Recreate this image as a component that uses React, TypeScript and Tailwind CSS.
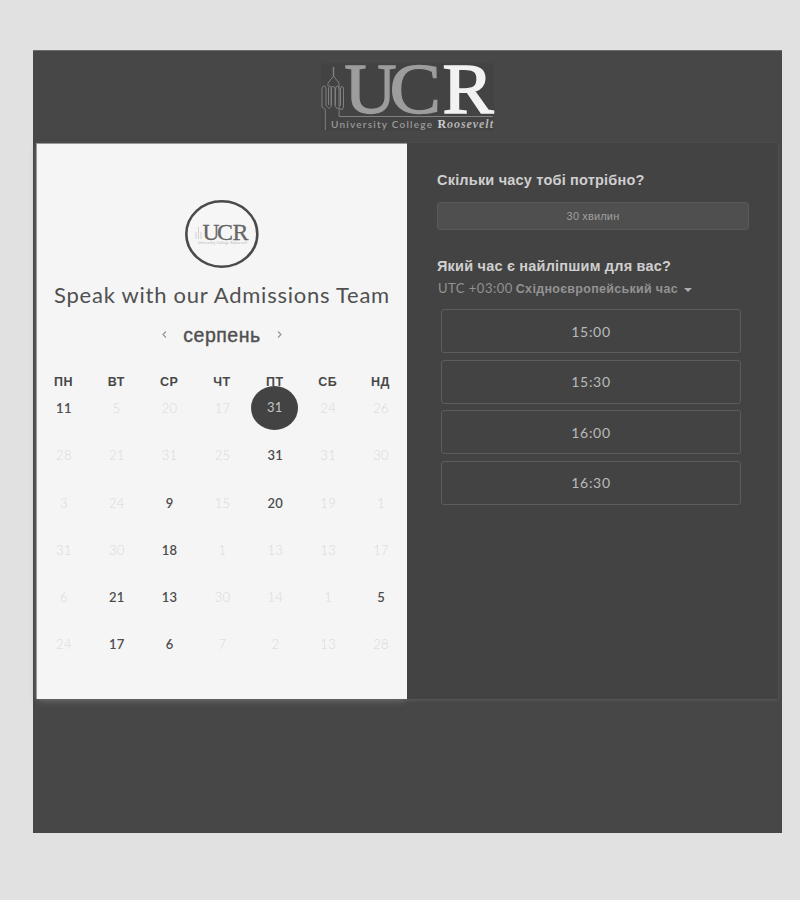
import React from 'react';

const weekdays = ['ПН', 'ВТ', 'СР', 'ЧТ', 'ПТ', 'СБ', 'НД'];

// A leading "*" marks a bookable day, "@" the chosen one.
const weeks = [
  ['*11', '5', '20', '17', '@31', '24', '26'],
  ['28', '21', '31', '25', '*31', '31', '30'],
  ['3', '24', '*9', '15', '*20', '19', '1'],
  ['31', '30', '*18', '1', '13', '13', '17'],
  ['6', '*21', '*13', '30', '14', '1', '*5'],
  ['24', '*17', '*6', '7', '2', '13', '28'],
];

const slots = ['15:00', '15:30', '16:00', '16:30'];

const serif = "'Liberation Serif', serif";
const sans = "Lato, 'Liberation Sans', sans-serif";

function Logo() {
  return (
    <svg className="block h-[68px] w-[176px] overflow-visible" viewBox="320 63 176 68">
      <rect x="321" y="63.500" width="173" height="67" fill="#434343" />
      <g fill="none" stroke="#808080" strokeWidth="1">
        <path strokeWidth="1.500" d="M333.500 67v9" />
        <path d="M333.500 76l-5.500 7v3M333.500 76l5.500 7v6" />
        <path d="M325.300 130v-20.500l-3.300-2.500v-18.500q0-2.500 2-2.500t2 2.500v17l3 3 2-2v-17.500q0-2.500 2-2.500t2 2.500v17l2.500 3 1-1" />
        <path d="M328.500 105v-16q0-3 1.500-3t1.500 3v16M335.500 105v-16q0-3 1.800-3t1.800 3v27.500H493M340.500 106v-17q0-2.500 1.500-2.500t1.500 2.500v18l-1.500 3-2.500-2" />
      </g>
      <g fontFamily={serif} fontSize="72">
        <text x="344.500" y="113" fill="#9d9d9d" stroke="#9d9d9d" strokeWidth="1.500" textLength="52" lengthAdjust="spacingAndGlyphs">U</text>
        <text x="389.500" y="113" fill="#9d9d9d" stroke="#9d9d9d" strokeWidth="1.300" textLength="51.500" lengthAdjust="spacingAndGlyphs">C</text>
        <text x="442.500" y="113" fill="#f2f2f2" stroke="#f2f2f2" strokeWidth="1.600" textLength="51" lengthAdjust="spacingAndGlyphs">R</text>
      </g>
      <text x="331" y="128" fill="#9a9a9a" fontFamily={sans} fontSize="10" fontWeight="600" textLength="101" lengthAdjust="spacing">University College</text>
      <text x="437.500" y="128" fill="#cfcfcf" fontFamily={serif} fontSize="12" fontWeight="700">R</text>
      <text x="447" y="128" fill="#b2b2b2" fontFamily={serif} fontSize="12" fontStyle="italic" fontWeight="700" textLength="46">oosevelt</text>
    </svg>
  );
}

function Badge() {
  return (
    <svg className="block h-[68px] w-[74px]" viewBox="185 200 74 68">
      <ellipse cx="221.800" cy="234" rx="35.500" ry="32.700" fill="#f6f6f6" stroke="#4a4a4a" strokeWidth="2.600" />
      <g fontFamily={serif} fontSize="23.500" fill="#666" stroke="#666" strokeWidth="0.300">
        <text x="202.500" y="240" textLength="17" lengthAdjust="spacingAndGlyphs">U</text>
        <text x="217" y="240" textLength="16" lengthAdjust="spacingAndGlyphs">C</text>
        <text x="232.500" y="240" textLength="16" lengthAdjust="spacingAndGlyphs">R</text>
      </g>
      <path d="M198.500 227v4M196 232v7M198.500 231v8M201 232v7" stroke="#d2d2d2" fill="none" />
      <text x="198" y="244" fontFamily={sans} fontSize="3.500" fill="#b5b5b5" textLength="49">University College Roosevelt</text>
    </svg>
  );
}

function Day({ value }: { value: string }) {
  if (value.startsWith('@')) {
    return (
      <div className="flex items-center justify-center">
        <span className="-mt-px flex h-[44px] w-[47px] shrink-0 items-center justify-center rounded-[50%] bg-[#434343] text-[13px] text-[#c4c4c4]">
          {value.slice(1)}
        </span>
      </div>
    );
  }
  const open = value.startsWith('*');
  return (
    <div className={open ? 'flex items-center justify-center pt-px pl-px font-semibold text-[#4c4c4c]' : 'flex items-center justify-center pt-px pl-px font-light text-[#d9d9d9]'}>
      {open ? value.slice(1) : value}
    </div>
  );
}

export default function App() {
  return (
    <div className="h-[900px] w-[800px] overflow-hidden bg-[#e1e1e1] pl-[33px] pt-[50px] font-['Liberation_Sans',sans-serif]">
      <div className="h-[783px] w-[749px] border-t border-[#6b6d6b] bg-[#474747]">
        <header className="flex h-[92px] justify-center pt-3">
          <Logo />
        </header>

        <main className="ml-[3px] flex h-[556px] w-[742px] shadow-[0_1px_3px_#5c5c5c]">
          <section className="w-[371px] shrink-0 border-t border-l border-[#999] bg-[#f5f5f5] pt-14 shadow-[0_4px_7px_-2px_#686868]">
            <div className="flex justify-center">
              <Badge />
            </div>
            <h1 className="mt-[11px] text-center font-['Lato',sans-serif] text-[22px] leading-8 tracking-[0.750px] whitespace-nowrap text-[#505050]">
              Speak with our Admissions Team
            </h1>
            <div className="mt-2 flex h-8 items-center justify-center gap-[15px] text-[#969696]">
              <svg className="-mt-0.5 size-[7px]" viewBox="0 0 7 7" fill="none" stroke="currentColor" strokeWidth="1.200">
                <path d="M5 .5 2 3.500l3 3" />
              </svg>
              <h2 className="text-[19.500px] leading-8 tracking-[0.500px] text-[#505050] [-webkit-text-stroke:0.400px_#505050]">серпень</h2>
              <svg className="-mt-0.5 size-[7px]" viewBox="0 0 7 7" fill="none" stroke="currentColor" strokeWidth="1.200">
                <path d="m2 .5 3 3-3 3" />
              </svg>
            </div>
            <div className="mt-[21px] grid h-5 w-[370px] grid-cols-7 text-center text-[12.500px] leading-5 font-bold tracking-[0.500px] text-[#484848]">
              {weekdays.map((d) => (
                <div key={d}>{d}</div>
              ))}
            </div>
            <div className="-mt-[7px] grid h-[283px] w-[370px] grid-cols-7 grid-rows-6 font-['Lato',sans-serif] text-[13px] tracking-[0.300px]">
              {weeks.flat().map((value, i) => (
                <Day key={i} value={value} />
              ))}
            </div>
          </section>

          <section className="min-w-0 flex-1 bg-[#434343] pt-[25px] pl-[30px]">
            <h3 className="text-[14.500px] leading-6 font-bold tracking-[0.200px] whitespace-nowrap text-[#cfcfcf]">Скільки часу тобі потрібно?</h3>
            <button className="mt-[10px] flex h-7 w-[312px] items-center justify-center rounded-[3px] border border-[#595959] bg-[#4f4f4f] text-[11px] tracking-[0.150px] text-[#a0a0a0]">
              30 хвилин
            </button>
            <h3 className="mt-[24px] text-[14.500px] leading-6 font-bold tracking-[0.200px] whitespace-nowrap text-[#cfcfcf]">Який час є найліпшим для вас?</h3>
            <div className="flex h-[22px] items-center gap-[6px] pl-px text-[#929292]">
              <div className="flex items-baseline gap-[3px] whitespace-nowrap">
                <span className="font-['Lato',sans-serif] text-[13px] tracking-[0.500px]">UTC +03:00</span>
                <span className="text-[12.500px] font-bold tracking-[0.300px]">Східноєвропейський час</span>
              </div>
              <span className="mt-0.5 border-x-[4px] border-t-[4px] border-x-transparent border-t-[#aaa]" />
            </div>
            <div className="mt-[9px] ml-1 flex w-[300px] flex-col gap-[6.600px]">
              {slots.map((s) => (
                <button key={s} className="h-[44px] rounded-[3px] border border-[#5c5c5c] font-['Lato',sans-serif] text-[14px] tracking-[0.700px] text-[#bababa]">
                  {s}
                </button>
              ))}
            </div>
          </section>
        </main>
      </div>
    </div>
  );
}
